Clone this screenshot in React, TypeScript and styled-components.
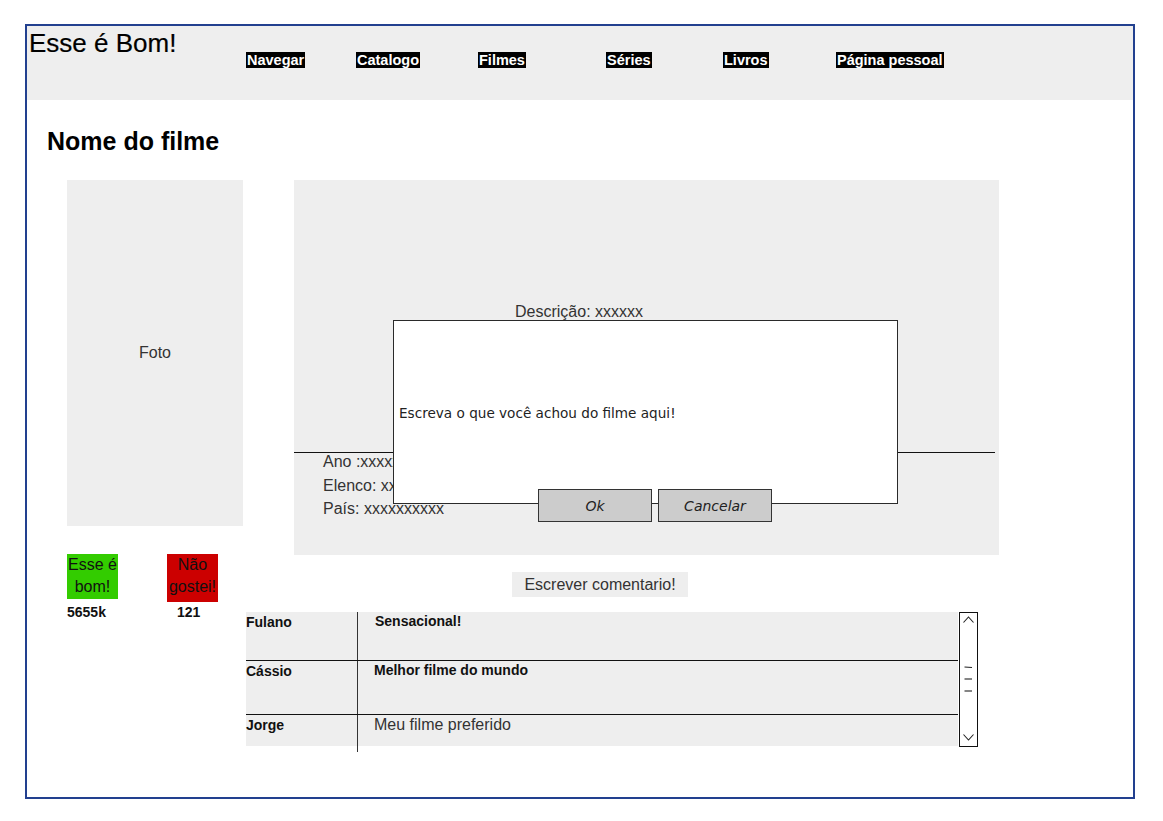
import styled, { createGlobalStyle } from "styled-components";

const GlobalStyle = createGlobalStyle`
    html, body {
        margin: 0;
        padding: 0;
        background: #ffffff;
    }
    body {
        font-family: "Liberation Sans", Arial, sans-serif;
        color: #333333;
    }
`

const navItems = [
    {label: "Navegar", width: 110},
    {label: "Catalogo", width: 122},
    {label: "Filmes", width: 128},
    {label: "Séries", width: 117},
    {label: "Livros", width: 113},
    {label: "Página pessoal", width: 120},
];

const comments = [
    {name: "Fulano", text: "Sensacional!", strong: true, height: 48, shift: 17},
    {name: "Cássio", text: "Melhor filme do mundo", strong: true, height: 54, shift: 16},
    {name: "Jorge", text: "Meu filme preferido", strong: false, height: 32, shift: 16},
];

export default function App() {
    return (
        <>
            <GlobalStyle/>
            <Frame>
                <Header>
                    <Brand>Esse é Bom!</Brand>
                    <Nav $columns={navItems.map(i => `${i.width}px`).join(" ")}>
                        {navItems.map(item => (
                            <NavLink key={item.label}>
                                <NavLabel>{item.label}</NavLabel>
                            </NavLink>
                        ))}
                    </Nav>
                </Header>

                <Content>
                    <MovieTitle>Nome do filme</MovieTitle>

                    <MovieGrid>
                        <Photo>Foto</Photo>

                        <DescPanel>
                            <DescTop>Descrição: xxxxxx</DescTop>
                            <Divider/>
                            <InfoList>
                                <InfoLine>Ano :xxxxxxxxxx</InfoLine>
                                <InfoLine>Elenco: xxxxxxxxxx</InfoLine>
                                <InfoLine>País: xxxxxxxxxx</InfoLine>
                            </InfoList>

                            <Dialog>
                                <DialogText>Escreva o que você achou do filme aqui!</DialogText>
                                <DialogButtons>
                                    <DialogButton>Ok</DialogButton>
                                    <DialogButton>Cancelar</DialogButton>
                                </DialogButtons>
                            </Dialog>
                        </DescPanel>

                        <Votes>
                            <VoteCol>
                                <VoteBox $bg="#33cc00" $h={45}>Esse é<br/>bom!</VoteBox>
                                <VoteCount $indent={0}>5655k</VoteCount>
                            </VoteCol>
                            <VoteCol>
                                <VoteBox $bg="#cc0000" $h={48}>Não<br/>gostei!</VoteBox>
                                <VoteCount $indent={10}>121</VoteCount>
                            </VoteCol>
                        </Votes>

                        <CommentsArea>
                            <WriteButton>Escrever comentario!</WriteButton>
                            <Table>
                                <Rows>
                                    {comments.map((c, i) => (
                                        <Row key={c.name} $h={c.height} $first={i === 0}>
                                            <Name>{c.name}</Name>
                                            <Comment $strong={c.strong} $shift={c.shift}
                                                     $tail={i === comments.length - 1}>
                                                {c.text}
                                            </Comment>
                                        </Row>
                                    ))}
                                </Rows>
                                <Scrollbar>
                                    <svg width="17" height="133" viewBox="0 0 17 133" fill="none"
                                         stroke="#222" strokeWidth="1.1">
                                        <path d="M3.5 9.5 L8.5 4 L13.5 9.5"/>
                                        <path d="M4.5 54 L12 54.5"/>
                                        <path d="M4.5 66 L12 66"/>
                                        <path d="M4.5 78 L12 78"/>
                                        <path d="M3.5 121.5 L8.5 127 L13.5 121.5"/>
                                    </svg>
                                </Scrollbar>
                            </Table>
                        </CommentsArea>
                    </MovieGrid>
                </Content>
            </Frame>
        </>
    );
};

const Frame = styled.div`
    box-sizing: border-box;
    margin: 24px 0 0 25px;
    width: 1110px;
    height: 775px;
    border: 2px solid #22408f;
    display: flex;
    flex-direction: column;
`

const Header = styled.header`
    height: 74px;
    background: #eeeeee;
    display: flex;
    align-items: flex-start;
`

const Brand = styled.h1`
    margin: 2px 0 0 2px;
    width: 217px;
    font-size: 26px;
    line-height: 30px;
    font-weight: 400;
    color: #000;
    -webkit-text-stroke: 0.2px #000;
`

const Nav = styled.nav<{ $columns: string }>`
    margin-top: 26px;
    display: grid;
    grid-template-columns: ${p => p.$columns};
`

const NavLink = styled.div`
    display: flex;
`

const NavLabel = styled.span`
    background: #000;
    color: #fff;
    font-size: 14.5px;
    line-height: 16px;
    font-weight: 700;
    padding: 0 1px;
`

const Content = styled.main`
    padding: 27px 0 0 20px;
`

const MovieTitle = styled.h2`
    margin: 0;
    font-size: 25px;
    line-height: 28px;
    font-weight: 700;
    color: #000;
`

const MovieGrid = styled.div`
    margin: 25px 0 0 20px;
    display: grid;
    grid-template-columns: 179px 754px;
    grid-template-rows: 375px auto;
`

const Photo = styled.div`
    width: 176px;
    height: 346px;
    background: #eeeeee;
    display: flex;
    align-items: center;
    justify-content: center;
    font-size: 16px;
    color: #333;
`

const DescPanel = styled.section`
    position: relative;
    margin-left: 48px;
    width: 705px;
    height: 375px;
    background: #eeeeee;
    display: flex;
    flex-direction: column;
`

const DescTop = styled.div`
    height: 150px;
    padding: 122px 0 0 221px;
    font-size: 16px;
    line-height: 19px;
`

const Divider = styled.div`
    width: 701px;
    border-top: 1px solid #111;
`

const InfoList = styled.div`
    margin-top: -3px;
    padding-left: 29px;
    display: flex;
    flex-direction: column;
`

const InfoLine = styled.div`
    font-size: 16px;
    line-height: 23.5px;
`

const Dialog = styled.div`
    position: absolute;
    left: 99px;
    top: 140px;
    box-sizing: border-box;
    width: 505px;
    height: 184px;
    background: #fff;
    border: 1px solid #2a2a2a;
    display: flex;
    flex-direction: column;
`

const DialogText = styled.div`
    flex: 1;
    display: flex;
    align-items: center;
    padding: 16px 0 0 5px;
    font-family: "Comic Sans MS", "DejaVu Sans", sans-serif;
    font-size: 13.6px;
    color: #222;
`

const DialogButtons = styled.div`
    display: flex;
    gap: 6px;
    padding-left: 144px;
    margin-bottom: -19px;
`

const DialogButton = styled.button`
    box-sizing: border-box;
    width: 114px;
    height: 33px;
    background: #cccccc;
    border: 1px solid #333;
    font-family: "Comic Sans MS", "DejaVu Sans", sans-serif;
    font-style: italic;
    font-size: 14px;
    color: #222;
    padding: 0;
`

const Votes = styled.div`
    display: flex;
    gap: 49px;
    margin-top: -1px;
`

const VoteCol = styled.div`
    width: 51px;
    display: flex;
    flex-direction: column;
`

const VoteBox = styled.div<{ $bg: string; $h: number }>`
    height: ${p => p.$h}px;
    margin-bottom: ${p => 50 - p.$h}px;
    background: ${p => p.$bg};
    color: #111;
    font-size: 16px;
    line-height: 22px;
    text-align: center;
    white-space: nowrap;
`

const VoteCount = styled.div<{ $indent: number }>`
    padding-left: ${p => p.$indent}px;
    font-size: 14px;
    line-height: 16px;
    font-weight: 700;
    color: #111;
`

const CommentsArea = styled.div`
    display: flex;
    flex-direction: column;
    align-items: flex-start;
    padding-top: 17px;
`

const WriteButton = styled.div`
    margin-left: 266px;
    width: 176px;
    height: 25px;
    background: #eeeeee;
    font-size: 16px;
    line-height: 25px;
    text-align: center;
    color: #333;
`

const Table = styled.div`
    margin-top: 15px;
    display: flex;
    align-items: flex-start;
`

const Rows = styled.div`
    width: 712px;
    display: flex;
    flex-direction: column;
`

const Row = styled.div<{ $h: number; $first: boolean }>`
    box-sizing: border-box;
    height: ${p => p.$h}px;
    background: #eeeeee;
    border-top: ${p => p.$first ? "none" : "1.5px solid #111"};
    display: grid;
    grid-template-columns: 111px 1fr;
`

const Name = styled.div`
    padding-top: 2px;
    font-size: 14px;
    line-height: 17px;
    font-weight: 700;
    color: #111;
`

const Comment = styled.div<{ $strong: boolean; $shift: number; $tail: boolean }>`
    border-left: 1.5px solid #333;
    padding: 1px 0 0 ${p => p.$shift}px;
    margin-bottom: ${p => p.$tail ? "-6px" : "0"};
    font-size: ${p => p.$strong ? "14px" : "16px"};
    line-height: 17px;
    font-weight: ${p => p.$strong ? 700 : 400};
    color: ${p => p.$strong ? "#111" : "#333"};
`

const Scrollbar = styled.div`
    box-sizing: border-box;
    width: 19px;
    height: 135px;
    margin-left: 1px;
    background: #fff;
    border: 1px solid #111;
    display: flex;
`
